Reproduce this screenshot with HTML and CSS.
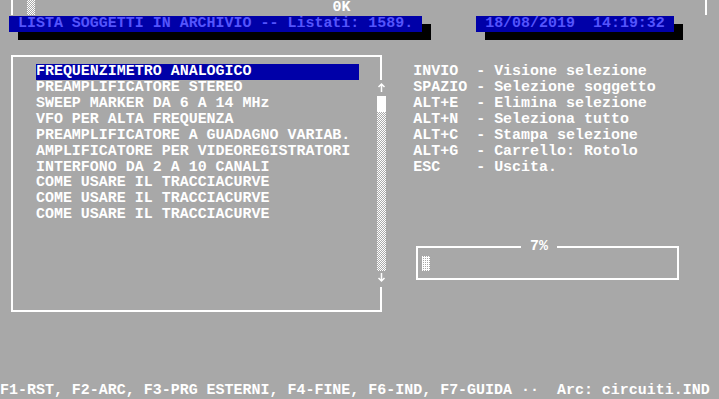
FILE: index.html
```html
<!DOCTYPE html>
<html lang="it">
<head>
    <meta charset="UTF-8">
    <title>Lista soggetti in archivio</title>
    <link rel="stylesheet" href="styles.css">
</head>
<body>
    <div class="screen">
        <!-- resti della finestra precedente -->
        <div class="edge edge-left"></div>
        <div class="shade shade-top"></div>
        <div class="status-ok">0K</div>
        <div class="edge edge-right"></div>

        <!-- barra titolo -->
        <div class="bar bar-title"> LISTA SOGGETTI IN ARCHIVIO -- Listati: 1589.</div>
        <div class="shadow-side title-side"></div>
        <div class="shadow-under title-under"></div>

        <div class="bar bar-date"> 18/08/2019  14:19:32 </div>
        <div class="shadow-side date-side"></div>
        <div class="shadow-under date-under"></div>

        <!-- elenco soggetti -->
        <div class="box box-list"></div>
        <ul class="list">
            <li class="selected">FREQUENZIMETRO ANALOGICO</li>
            <li>PREAMPLIFICATORE STEREO</li>
            <li>SWEEP MARKER DA 6 A 14 MHz</li>
            <li>VFO PER ALTA FREQUENZA</li>
            <li>PREAMPLIFICATORE A GUADAGNO VARIAB.</li>
            <li>AMPLIFICATORE PER VIDEOREGISTRATORI</li>
            <li>INTERFONO DA 2 A 10 CANALI</li>
            <li>COME USARE IL TRACCIACURVE</li>
            <li>COME USARE IL TRACCIACURVE</li>
            <li>COME USARE IL TRACCIACURVE</li>
        </ul>
        <div class="scrollbar">
            <svg class="arrow" width="9" height="16" viewBox="0 0 9 16">
                <path d="M4.5 4 V12 M1.5 7 L4.5 4 L7.5 7" fill="none" stroke="#fff" stroke-width="1.5"/>
            </svg>
            <div class="thumb"></div>
            <div class="track"></div>
            <svg class="arrow" width="9" height="16" viewBox="0 0 9 16">
                <path d="M4.5 2 V10 M1.5 7 L4.5 10 L7.5 7" fill="none" stroke="#fff" stroke-width="1.5"/>
            </svg>
        </div>

        <!-- tasti -->
        <div class="keys">
            <div>INVIO  - Visione selezione</div>
            <div>SPAZIO - Selezione soggetto</div>
            <div>ALT+E  - Elimina selezione</div>
            <div>ALT+N  - Seleziona tutto</div>
            <div>ALT+C  - Stampa selezione</div>
            <div>ALT+G  - Carrello: Rotolo</div>
            <div>ESC    - Uscita.</div>
        </div>

        <!-- avanzamento -->
        <div class="box box-progress"></div>
        <div class="progress-label"> 7% </div>
        <div class="shade shade-progress"></div>

        <div class="footer">F1-RST, F2-ARC, F3-PRG ESTERNI, F4-FINE, F6-IND, F7-GUIDA ··  Arc: circuiti.IND</div>
    </div>
</body>
</html>
```

FILE: styles.css
```css
:root {
    --gray: #a8a8a8;
    --blue: #0000a8;
    --light-blue: #5454fc;
    --white: #ffffff;
    --cell-w: 8.9875px;
    --cell-h: 15.96px;
}
* {
    margin: 0;
    padding: 0;
    box-sizing: border-box;
}
body {
    background-color: var(--gray);
    color: var(--white);
    font-family: 'Liberation Mono', 'DejaVu Sans Mono', monospace;
    font-size: 14.98px;
    font-weight: bold;
    line-height: var(--cell-h);
    overflow: hidden;
}
.screen {
    display: grid;
    grid-template-columns: repeat(80, var(--cell-w));
    grid-template-rows: repeat(25, var(--cell-h));
    width: 719px;
    height: 399px;
}

/* riga 0 */
.edge {
    grid-row: 1;
    border-left: 2px solid var(--white);
    height: 15px;
}
.edge-left {
    grid-column: 2;
    margin-left: 2px;
}
.edge-right {
    grid-column: 79;
    margin-left: 4px;
}
.shade {
    background-image: repeating-conic-gradient(var(--white) 0 25%, var(--gray) 0 50%);
    background-size: 2px 2px;
}
.shade-top {
    grid-row: 1;
    grid-column: 4;
    width: 8px;
    height: 15px;
}
.status-ok {
    grid-row: 1;
    grid-column: 38 / span 2;
}

/* barre blu */
.bar {
    grid-row: 2;
    background-color: var(--blue);
    color: var(--light-blue);
    white-space: pre;
}
.bar-title {
    grid-column: 2 / span 46;
}
.bar-date {
    grid-column: 54 / span 22;
}
.shadow-side {
    grid-row: 2;
    align-self: end;
    height: 8px;
    background-color: #000;
}
.shadow-under {
    grid-row: 3;
    align-self: start;
    height: 8px;
    background-color: #000;
}
.title-side {
    grid-column: 48;
}
.title-under {
    grid-column: 3 / span 46;
}
.date-side {
    grid-column: 76;
}
.date-under {
    grid-column: 55 / span 22;
}

/* cornici */
.box {
    border: 2px solid var(--white);
}
.box-list {
    grid-row: 4 / 21;
    grid-column: 2 / 44;
    margin: 7px 4px 7px 2px;
}
.box-progress {
    grid-row: 16 / 19;
    grid-column: 47 / 77;
    margin: 7px 4px 7px 3px;
}

/* elenco */
.list {
    grid-row: 5 / span 10;
    grid-column: 5 / span 36;
    list-style: none;
}
.list li {
    height: var(--cell-h);
    white-space: pre;
}
.list .selected {
    background-color: var(--blue);
}
.scrollbar {
    grid-row: 6 / 19;
    grid-column: 43;
    display: flex;
    flex-direction: column;
    background-color: var(--gray);
}
.arrow {
    display: block;
    height: var(--cell-h);
}
.thumb {
    height: var(--cell-h);
    background-color: var(--white);
}
.track {
    flex: 1;
    background-image: repeating-conic-gradient(var(--white) 0 25%, var(--gray) 0 50%);
    background-size: 2px 2px;
}

/* tasti */
.keys {
    grid-row: 5 / span 7;
    grid-column: 47 / span 30;
}
.keys div {
    height: var(--cell-h);
    white-space: pre;
}

/* avanzamento */
.progress-label {
    grid-row: 16;
    grid-column: 59 / span 4;
    background-color: var(--gray);
    white-space: pre;
}
.shade-progress {
    grid-row: 17;
    grid-column: 48;
    width: 8px;
    height: 15px;
    align-self: center;
    background-image: repeating-conic-gradient(var(--gray) 0 25%, var(--white) 0 100%);
}

.footer {
    grid-row: 25;
    grid-column: 1 / span 80;
    white-space: pre;
}
```
